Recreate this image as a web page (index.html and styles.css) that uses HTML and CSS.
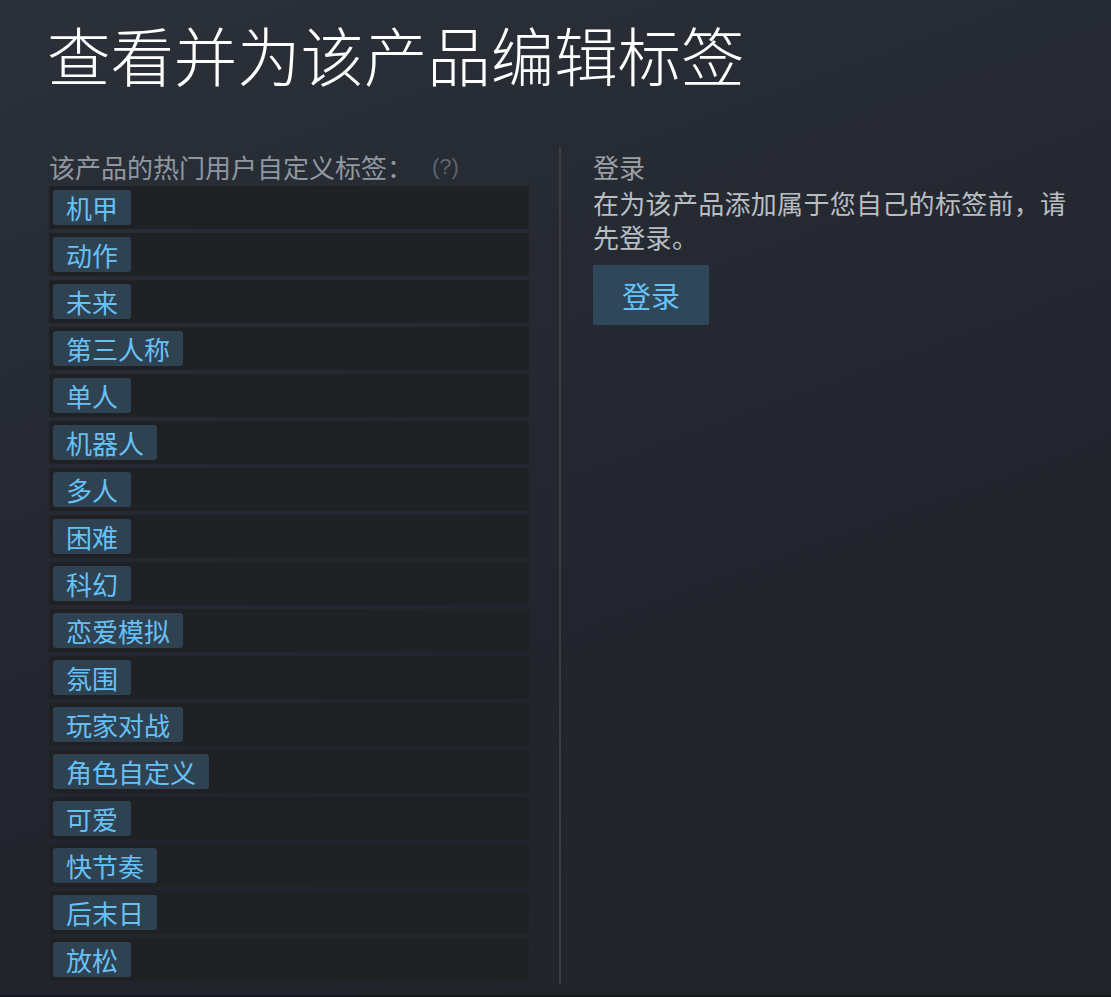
FILE: index.html
```html
<!DOCTYPE html>
<html lang="zh-CN">
<head>
<meta charset="utf-8">
<title>查看并为该产品编辑标签</title>
<link rel="stylesheet" href="styles.css">
</head>
<body>
<div class="page">
  <h1 class="title">查看并为该产品编辑标签</h1>
  <div class="columns">
    <div class="left">
      <div class="label">该产品的热门用户自定义标签：<span class="help">(?)</span></div>
      <div class="rows">
        <div class="row"><span class="tag">机甲</span></div>
        <div class="row"><span class="tag">动作</span></div>
        <div class="row"><span class="tag">未来</span></div>
        <div class="row"><span class="tag">第三人称</span></div>
        <div class="row"><span class="tag">单人</span></div>
        <div class="row"><span class="tag">机器人</span></div>
        <div class="row"><span class="tag">多人</span></div>
        <div class="row"><span class="tag">困难</span></div>
        <div class="row"><span class="tag">科幻</span></div>
        <div class="row"><span class="tag">恋爱模拟</span></div>
        <div class="row"><span class="tag">氛围</span></div>
        <div class="row"><span class="tag">玩家对战</span></div>
        <div class="row"><span class="tag">角色自定义</span></div>
        <div class="row"><span class="tag">可爱</span></div>
        <div class="row"><span class="tag">快节奏</span></div>
        <div class="row"><span class="tag">后末日</span></div>
        <div class="row"><span class="tag">放松</span></div>
      </div>
    </div>
    <div class="right">
      <div class="login-title">登录</div>
      <p class="login-text">在为该产品添加属于您自己的标签前，请先登录。</p>
      <a class="btn" href="#">登录</a>
    </div>
  </div>
</div>
<div class="footer"></div>
</body>
</html>
```

FILE: styles.css
```css
html, body {
  margin: 0;
  padding: 0;
}
body {
  width: 1111px;
  min-height: 997px;
  background: linear-gradient(160deg, #2c3038 0%, #262a32 30%, #22252d 60%, #21242b 100%);
  font-family: "Noto Sans CJK SC", "Liberation Sans", sans-serif;
  color: #c6d4df;
  overflow: hidden;
}
.page {
  padding: 21px 0 0 47px;
}
.title {
  margin: 0;
  height: 64px;
  font-size: 63.4px;
  line-height: 64px;
  font-weight: 300;
  color: #ffffff;
  white-space: nowrap;
}
.columns {
  display: flex;
  margin-top: 62px;
}
.left {
  width: 480px;
  margin-left: 2px;
  margin-right: 30px;
  padding-bottom: 3px;
}
.label {
  height: 39px;
  font-size: 26px;
  line-height: 39px;
  color: #8f98a0;
  white-space: nowrap;
}
.help {
  display: inline-block;
  vertical-align: top;
  line-height: 39px;
  font-size: 22px;
  color: #5d656d;
  margin-left: 19px;
  font-family: "Liberation Sans", sans-serif;
}
.rows {
  display: flex;
  flex-direction: column;
  gap: 4px;
}
.row {
  background: #202124;
  padding: 4px;
  height: 35px;
  display: flex;
}
.tag {
  display: inline-block;
  height: 35px;
  line-height: 35px;
  padding: 0 13px;
  font-size: 26px;
  color: #67c1f5;
  background: #2f4252;
  border-radius: 3px;
}
.right {
  border-left: 2px solid #3a3d44;
  padding-left: 32px;
  width: 480px;
}
.login-title {
  font-size: 26px;
  line-height: 39px;
  color: #9aa0a6;
}
.login-text {
  margin: 0;
  font-size: 26px;
  line-height: 34px;
  letter-spacing: 0.3px;
  color: #b9bec3;
  width: 486px;
}
.btn {
  display: inline-block;
  margin-top: 11px;
  height: 60px;
  line-height: 60px;
  padding: 0 29px;
  font-size: 29px;
  color: #67c1f5;
  background: #30475a;
  border-radius: 2px;
  text-decoration: none;
}
.footer {
  margin-top: 11px;
  height: 10px;
  background: #17191d;
}
```
